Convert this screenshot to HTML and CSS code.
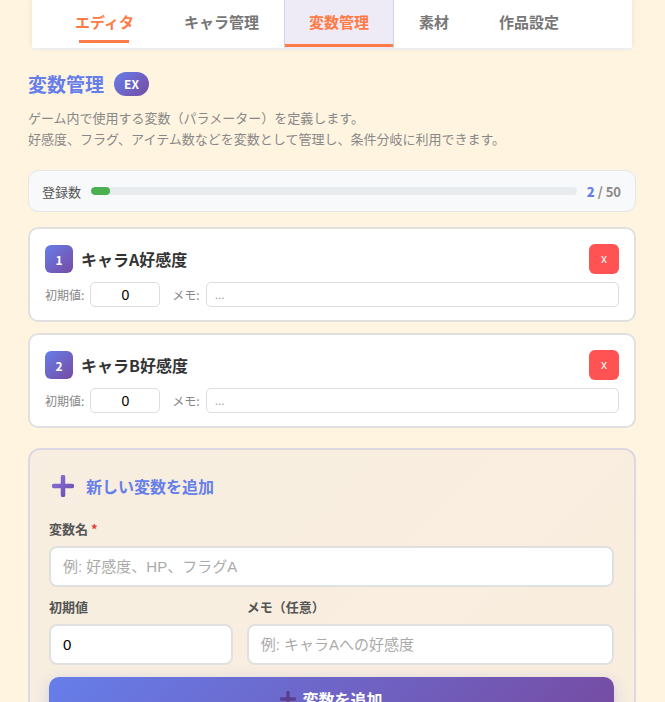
FILE: index.html
```html
<!DOCTYPE html>
<html lang="ja">
<head>
  <meta charset="UTF-8" />
  <meta name="viewport" content="width=device-width, initial-scale=1.0"/>
  <title>変数管理</title>
  <link rel="stylesheet" href="styles.css">
</head>
<body>
  <div class="page">
    <nav class="tabs">
      <a class="tab current">エディタ</a>
      <a class="tab">キャラ管理</a>
      <a class="tab active">変数管理</a>
      <a class="tab">素材</a>
      <a class="tab">作品設定</a>
    </nav>

    <h2 class="title">変数管理 <span class="badge-ex">EX</span></h2>
    <p class="desc">ゲーム内で使用する変数（パラメーター）を定義します。<br>好感度、フラグ、アイテム数などを変数として管理し、条件分岐に利用できます。</p>

    <div class="stats">
      <span class="stats-label">登録数</span>
      <div class="bar"><div class="bar-fill" style="width: 4%"></div></div>
      <span class="stats-count"><b>2</b> / 50</span>
    </div>

    <div class="var-card">
      <div class="var-head">
        <span class="var-num">1</span>
        <span class="var-name">キャラA好感度</span>
        <button type="button" class="var-del">x</button>
      </div>
      <div class="var-row">
        <label>初期値:</label>
        <input class="var-init" type="text" value="0">
        <label class="memo-label">メモ:</label>
        <input class="var-memo" type="text" placeholder="...">
      </div>
    </div>

    <div class="var-card">
      <div class="var-head">
        <span class="var-num">2</span>
        <span class="var-name">キャラB好感度</span>
        <button type="button" class="var-del">x</button>
      </div>
      <div class="var-row">
        <label>初期値:</label>
        <input class="var-init" type="text" value="0">
        <label class="memo-label">メモ:</label>
        <input class="var-memo" type="text" placeholder="...">
      </div>
    </div>

    <div class="add-box">
      <h3 class="add-title">
        <svg class="plus" width="22" height="22" viewBox="0 0 22 22">
          <defs>
            <linearGradient id="pg" x1="0" y1="0" x2="1" y2="1">
              <stop offset="0" stop-color="#8a6fd8"/>
              <stop offset="1" stop-color="#6a4fb0"/>
            </linearGradient>
          </defs>
          <path d="M11 2v18M2 11h18" stroke="url(#pg)" stroke-width="4.5" stroke-linecap="round"/>
        </svg>
        新しい変数を追加
      </h3>
      <div class="field">
        <label>変数名 <span class="req">*</span></label>
        <input type="text" placeholder="例: 好感度、HP、フラグA">
      </div>
      <div class="field-grid">
        <div class="field">
          <label>初期値</label>
          <input type="text" value="0">
        </div>
        <div class="field">
          <label>メモ（任意）</label>
          <input type="text" placeholder="例: キャラAへの好感度">
        </div>
      </div>
      <button type="button" class="add-btn">
        <svg width="16" height="16" viewBox="0 0 22 22"><path d="M11 2v18M2 11h18" stroke="#5a3f90" stroke-width="4.5" stroke-linecap="round"/></svg>
        変数を追加
      </button>
    </div>
  </div>
</body>
</html>
```

FILE: styles.css
```css
body {
  margin: 0;
  background: #fff4e0;
  font-family: "Noto Sans CJK JP", sans-serif;
  color: #333;
}
.page { padding: 0 29px 0 28px; }

.tabs {
  display: flex;
  margin: 0 4px;
  padding-left: 18px;
  height: 48px;
  background: #fff;
  border-bottom: 2px solid #eeeeee;
  box-shadow: 0 -2px 6px rgba(0,0,0,0.08);
}
.tab {
  position: relative;
  display: flex;
  align-items: center;
  padding: 0 24px 6px;
  font-size: 15px;
  font-weight: bold;
  color: #777;
  border-left: 1px solid transparent;
  border-right: 1px solid transparent;
}
.tab.current { color: #ff7a45; }
.tab.current::after {
  content: "";
  position: absolute;
  left: 50%;
  margin-left: -25px;
  bottom: 5px;
  width: 50px;
  height: 3px;
  background: #ff7a45;
}
.tab.active {
  color: #ff7a45;
  background: #eeebf6;
  border-color: #cfd2ea;
}
.tab.active::after {
  content: "";
  position: absolute;
  left: 0;
  right: 0;
  bottom: 1px;
  height: 3px;
  background: #ff7a45;
}

.title {
  display: flex;
  align-items: center;
  gap: 10px;
  margin: 20px 0 0;
  font-size: 19px;
  color: #667eea;
  line-height: 28px;
}
.badge-ex {
  display: inline-flex;
  align-items: center;
  justify-content: center;
  width: 35px;
  height: 24px;
  border-radius: 12px;
  background: linear-gradient(135deg, #667eea, #764ba2);
  color: #fff;
  font-size: 12px;
  font-weight: bold;
}
.desc {
  margin: 9px 0 21px;
  font-size: 13px;
  line-height: 21px;
  color: #888;
}

.stats {
  display: flex;
  align-items: center;
  gap: 10px;
  height: 40px;
  padding: 0 14px 0 13px;
  background: #f8f9fa;
  border: 1px solid #e6e6e6;
  border-radius: 10px;
  margin-bottom: 15px;
}
.stats-label { font-size: 13px; color: #555; }
.bar {
  flex: 1;
  height: 8px;
  background: #e9ecef;
  border-radius: 4px;
  overflow: hidden;
}
.bar-fill { height: 100%; background: #4caf50; border-radius: 4px; }
.stats-count { font-size: 13px; font-weight: bold; color: #888; }
.stats-count b { color: #667eea; }

.var-card {
  background: #fff;
  border: 2px solid #e0e0e0;
  border-radius: 10px;
  padding: 15px 15px 13px;
  margin-bottom: 11px;
}
.var-head {
  display: flex;
  align-items: center;
  gap: 8px;
  height: 30px;
}
.var-num {
  display: flex;
  align-items: center;
  justify-content: center;
  width: 28px;
  height: 28px;
  border-radius: 6px;
  background: linear-gradient(135deg, #667eea, #764ba2);
  color: #fff;
  font-size: 12px;
  font-weight: bold;
}
.var-name { flex: 1; font-size: 16px; font-weight: bold; color: #333; }
.var-del {
  width: 30px;
  height: 30px;
  border: none;
  border-radius: 6px;
  background: #ff5252;
  color: #fff;
  font-size: 12px;
  font-family: "Liberation Sans", sans-serif;
  padding: 0;
}
.var-row {
  display: flex;
  align-items: center;
  gap: 6px;
  margin-top: 8px;
}
.var-row label { font-size: 12px; color: #888; }
.var-row .memo-label { margin-left: 6px; }
.var-row input {
  box-sizing: border-box;
  height: 25px;
  border: 1px solid #ddd;
  border-radius: 5px;
  font-family: "Liberation Sans", "Noto Sans CJK JP", sans-serif;
  font-size: 14px;
  padding: 0 8px;
  outline: none;
}
.var-init { width: 70px; text-align: center; }
.var-memo { flex: 1; font-size: 12px !important; }
.var-memo::placeholder { color: #999; }

.add-box {
  margin-top: 20px;
  border: 2px solid #ddd8e3;
  border-radius: 12px;
  padding: 21px 20px 0 19px;
  background: linear-gradient(135deg, rgba(102,126,234,0.05), rgba(118,75,162,0.04));
  height: 260px;
}
.add-title {
  display: flex;
  align-items: center;
  gap: 12px;
  margin: 0 0 18px 3px;
  height: 30px;
  font-size: 16px;
  color: #667eea;
}
.field { display: flex; flex-direction: column; }
.field label {
  font-size: 13px;
  font-weight: bold;
  color: #555;
  margin-bottom: 7px;
  line-height: 20px;
}
.req { color: #e53935; }
.field input {
  box-sizing: border-box;
  width: 100%;
  height: 41px;
  border: 2px solid #e0e0e0;
  border-radius: 8px;
  background: #fff;
  padding: 0 12px;
  font-family: "Liberation Sans", "Noto Sans CJK JP", sans-serif;
  font-size: 15px;
  color: #000;
  outline: none;
}
.field input::placeholder { color: #aaa; }
.field-grid {
  display: grid;
  grid-template-columns: 1fr 2fr;
  gap: 14px;
  margin-top: 10px;
}
.add-btn {
  display: flex;
  align-items: center;
  justify-content: center;
  gap: 6px;
  width: 100%;
  height: 44px;
  margin-top: 12px;
  border: none;
  border-radius: 10px;
  background: linear-gradient(135deg, #667eea, #764ba2);
  box-shadow: 0 4px 15px rgba(102,126,234,0.3);
  color: #fff;
  font-family: "Noto Sans CJK JP", sans-serif;
  font-size: 16px;
  font-weight: bold;
}
```
